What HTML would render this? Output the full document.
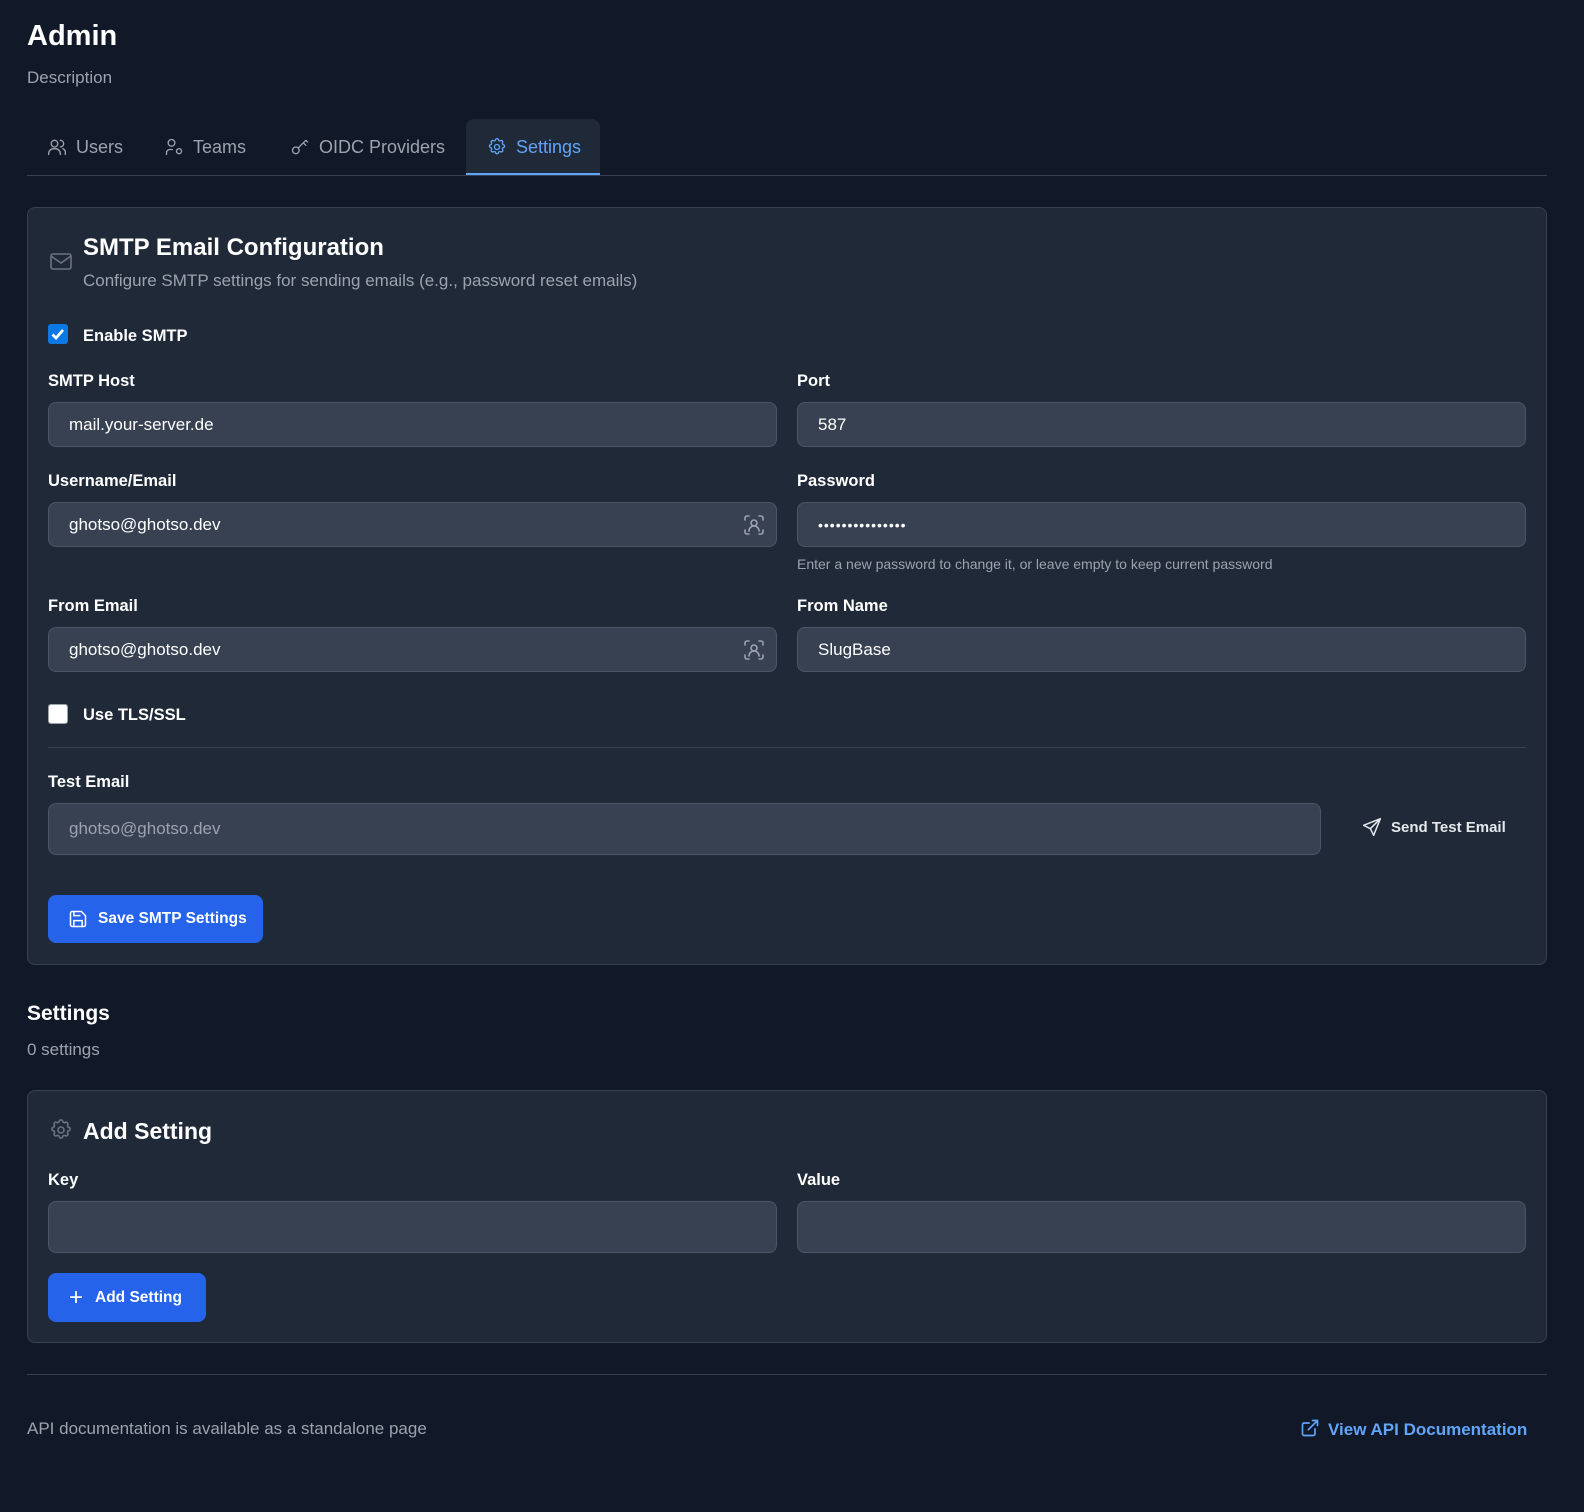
<!DOCTYPE html>
<html><head><meta charset="utf-8"><style>
*{box-sizing:border-box;margin:0;padding:0}
body{width:1584px;height:1512px;background:#111827;font-family:"Liberation Sans",sans-serif;color:#fff;position:relative;overflow:hidden}
.a{position:absolute;white-space:nowrap}
.card{position:absolute;left:27px;width:1520px;background:#1f2937;border:1px solid #374151;border-radius:8px}
.lbl{position:absolute;font-size:16.5px;font-weight:bold;color:#fff;line-height:20px}
.inp{position:absolute;background:#374151;border:1px solid #4b5563;border-radius:8px;font-size:17px;color:#fff;padding-left:20px;display:flex;align-items:center}
.btn{position:absolute;background:#2563eb;border-radius:8px;color:#fff;font-size:15.5px;font-weight:bold;display:flex;align-items:center}
.tab{position:absolute;top:119px;height:56px;display:flex;align-items:center;font-size:18px;color:#9ca3af}
.tab svg{margin-right:9px}
</style></head><body>
<div class="a" style="left:27px;top:18px;font-size:29px;font-weight:bold;line-height:36px">Admin</div>
<div class="a" style="left:27px;top:67px;font-size:17px;color:#9ca3af;line-height:22px">Description</div>

<div style="position:absolute;left:466px;top:119px;width:134px;height:57px;background:#1f2937;border-radius:8px 8px 0 0"></div>
<div class="tab" style="left:47px"><svg width="20" height="20" viewBox="0 0 24 24" fill="none" stroke="#9ca3af" stroke-width="1.6" stroke-linecap="round"><circle cx="9" cy="8" r="4"/><path d="M2 21v-1a6 6 0 0 1 6-6h2a6 6 0 0 1 6 6v1M16 4a4 4 0 0 1 0 8M19 14a5 5 0 0 1 3 5v2"/></svg>Users</div>
<div class="tab" style="left:164px"><svg width="20" height="20" viewBox="0 0 24 24" fill="none" stroke="#9ca3af" stroke-width="1.6" stroke-linecap="round"><circle cx="9" cy="7" r="4"/><path d="M3 21v-2a4 4 0 0 1 4-4h3"/><circle cx="18" cy="17" r="3"/></svg>Teams</div>
<div class="tab" style="left:290px"><svg width="20" height="20" viewBox="0 0 24 24" fill="none" stroke="#9ca3af" stroke-width="1.6" stroke-linecap="round"><circle cx="7" cy="16" r="4"/><path d="M10 13l9-9M16 7l3 3M19 4l2 2"/></svg>OIDC Providers</div>
<div class="tab" style="left:487px;color:#60a5fa"><svg width="20" height="20" viewBox="0 0 24 24" fill="none" stroke="#60a5fa" stroke-width="1.6"><path d="M10.3 3.3c.4-1.8 3-1.8 3.4 0a1.7 1.7 0 0 0 2.6 1.1c1.5-.9 3.3.8 2.4 2.4a1.7 1.7 0 0 0 1 2.5c1.8.4 1.8 3 0 3.4a1.7 1.7 0 0 0-1 2.6c.9 1.5-.9 3.3-2.4 2.4a1.7 1.7 0 0 0-2.6 1c-.4 1.8-3 1.8-3.4 0a1.7 1.7 0 0 0-2.6-1c-1.5.9-3.3-.9-2.4-2.4a1.7 1.7 0 0 0-1-2.6c-1.8-.4-1.8-3 0-3.4a1.7 1.7 0 0 0 1-2.5c-.9-1.6.9-3.3 2.4-2.4a1.7 1.7 0 0 0 2.6-1.1z"/><circle cx="12" cy="12" r="3"/></svg>Settings</div>
<div style="position:absolute;left:466px;top:173px;width:134px;height:3px;background:#60a5fa"></div>
<div style="position:absolute;left:27px;top:175px;width:1520px;height:1px;background:#374151"></div>

<div class="card" style="top:207px;height:758px"></div>
<svg class="a" style="left:49px;top:249px" width="24" height="24" viewBox="0 0 24 24" fill="none" stroke="#6b7280" stroke-width="1.6"><rect x="2" y="5" width="20" height="15" rx="2"/><path d="M2 7l10 7 10-7"/></svg>
<div class="a" style="left:83px;top:233px;font-size:24px;font-weight:bold;line-height:30px">SMTP Email Configuration</div>
<div class="a" style="left:83px;top:270px;font-size:17px;color:#9ca3af;line-height:22px">Configure SMTP settings for sending emails (e.g., password reset emails)</div>

<div style="position:absolute;left:48px;top:324px;width:20px;height:20px;background:#0b78e3;border-radius:3px"><svg width="20" height="20" viewBox="0 0 20 20"><path d="M4.5 10.5l3.5 3.5 7-8" fill="none" stroke="#fff" stroke-width="2.8"/></svg></div>
<div class="lbl" style="left:83px;top:326px">Enable SMTP</div>

<div class="lbl" style="left:48px;top:371px">SMTP Host</div>
<div class="lbl" style="left:797px;top:371px">Port</div>
<div class="inp" style="left:48px;top:402px;width:729px;height:45px">mail.your-server.de</div>
<div class="inp" style="left:797px;top:402px;width:729px;height:45px">587</div>

<div class="lbl" style="left:48px;top:471px">Username/Email</div>
<div class="lbl" style="left:797px;top:471px">Password</div>
<div class="inp" style="left:48px;top:502px;width:729px;height:45px">ghotso@ghotso.dev</div>
<div class="inp" style="left:797px;top:502px;width:729px;height:45px;letter-spacing:1px;font-size:14px">•••••••••••••••</div>
<div class="a" style="left:797px;top:555px;font-size:14px;color:#9ca3af;line-height:18px">Enter a new password to change it, or leave empty to keep current password</div>

<div class="lbl" style="left:48px;top:596px">From Email</div>
<div class="lbl" style="left:797px;top:596px">From Name</div>
<div class="inp" style="left:48px;top:627px;width:729px;height:45px">ghotso@ghotso.dev</div>
<div class="inp" style="left:797px;top:627px;width:729px;height:45px">SlugBase</div>
<svg class="a" style="left:742px;top:513px" width="24" height="24" viewBox="0 0 24 24" fill="none" stroke="#9ca3af" stroke-width="1.6" stroke-linecap="round"><path d="M3 7V5a2 2 0 0 1 2-2h2M17 3h2a2 2 0 0 1 2 2v2M21 17v2a2 2 0 0 1-2 2h-2M7 21H5a2 2 0 0 1-2-2v-2"/><circle cx="12" cy="10" r="3"/><path d="M7 18a5 5 0 0 1 10 0"/></svg>
<svg class="a" style="left:742px;top:638px" width="24" height="24" viewBox="0 0 24 24" fill="none" stroke="#9ca3af" stroke-width="1.6" stroke-linecap="round"><path d="M3 7V5a2 2 0 0 1 2-2h2M17 3h2a2 2 0 0 1 2 2v2M21 17v2a2 2 0 0 1-2 2h-2M7 21H5a2 2 0 0 1-2-2v-2"/><circle cx="12" cy="10" r="3"/><path d="M7 18a5 5 0 0 1 10 0"/></svg>

<div style="position:absolute;left:48px;top:704px;width:20px;height:20px;background:#fff;border:1px solid #9ca3af;border-radius:3px"></div>
<div class="lbl" style="left:83px;top:705px">Use TLS/SSL</div>

<div style="position:absolute;left:48px;top:747px;width:1478px;height:1px;background:#374151"></div>
<div class="lbl" style="left:48px;top:772px">Test Email</div>
<div class="inp" style="left:48px;top:803px;width:1273px;height:52px;color:#9ca3af">ghotso@ghotso.dev</div>
<svg class="a" style="left:1362px;top:817px" width="20" height="20" viewBox="0 0 24 24" fill="none" stroke="#e5e7eb" stroke-width="1.8" stroke-linejoin="round"><path d="M22 2L2 10l8 4 4 8z M10 14l12-12"/></svg>
<div class="a" style="left:1391px;top:818px;font-size:15px;font-weight:bold;color:#e5e7eb;line-height:20px">Send Test Email</div>

<div class="btn" style="left:48px;top:895px;width:215px;height:48px;padding-left:20px"><svg width="20" height="20" viewBox="0 0 24 24" fill="none" stroke="#fff" stroke-width="1.8" style="margin-right:10px"><path d="M5 3h11l5 5v11a2 2 0 0 1-2 2H5a2 2 0 0 1-2-2V5a2 2 0 0 1 2-2z"/><path d="M7 3v5h8M7 21v-7h10v7"/></svg>Save SMTP Settings</div>

<div class="a" style="left:27px;top:1000px;font-size:21px;font-weight:bold;line-height:28px">Settings</div>
<div class="a" style="left:27px;top:1039px;font-size:17px;color:#9ca3af;line-height:22px">0 settings</div>

<div class="card" style="top:1090px;height:253px"></div>
<svg class="a" style="left:49px;top:1118px" width="24" height="24" viewBox="0 0 24 24" fill="none" stroke="#6b7280" stroke-width="1.6"><path d="M10.3 3.3c.4-1.8 3-1.8 3.4 0a1.7 1.7 0 0 0 2.6 1.1c1.5-.9 3.3.8 2.4 2.4a1.7 1.7 0 0 0 1 2.5c1.8.4 1.8 3 0 3.4a1.7 1.7 0 0 0-1 2.6c.9 1.5-.9 3.3-2.4 2.4a1.7 1.7 0 0 0-2.6 1c-.4 1.8-3 1.8-3.4 0a1.7 1.7 0 0 0-2.6-1c-1.5.9-3.3-.9-2.4-2.4a1.7 1.7 0 0 0-1-2.6c-1.8-.4-1.8-3 0-3.4a1.7 1.7 0 0 0 1-2.5c-.9-1.6.9-3.3 2.4-2.4a1.7 1.7 0 0 0 2.6-1.1z"/><circle cx="12" cy="12" r="3"/></svg>
<div class="a" style="left:83px;top:1116px;font-size:23px;font-weight:bold;line-height:30px">Add Setting</div>
<div class="lbl" style="left:48px;top:1170px">Key</div>
<div class="lbl" style="left:797px;top:1170px">Value</div>
<div class="inp" style="left:48px;top:1201px;width:729px;height:52px"></div>
<div class="inp" style="left:797px;top:1201px;width:729px;height:52px"></div>
<div class="btn" style="left:48px;top:1273px;width:158px;height:49px;padding-left:21px"><span style="font-size:24px;font-weight:normal;margin-right:12px;line-height:20px">+</span>Add Setting</div>

<div style="position:absolute;left:27px;top:1374px;width:1520px;height:1px;background:#374151"></div>
<div class="a" style="left:27px;top:1418px;font-size:17px;color:#9ca3af;line-height:22px">API documentation is available as a standalone page</div>
<svg class="a" style="left:1300px;top:1418px" width="20" height="20" viewBox="0 0 24 24" fill="none" stroke="#60a5fa" stroke-width="2" stroke-linecap="round"><path d="M18 13v6a2 2 0 0 1-2 2H5a2 2 0 0 1-2-2V8a2 2 0 0 1 2-2h6M15 3h6v6M10 14L21 3"/></svg>
<div class="a" style="left:1328px;top:1419px;font-size:17px;font-weight:bold;color:#60a5fa;line-height:22px">View API Documentation</div>
</body></html>
